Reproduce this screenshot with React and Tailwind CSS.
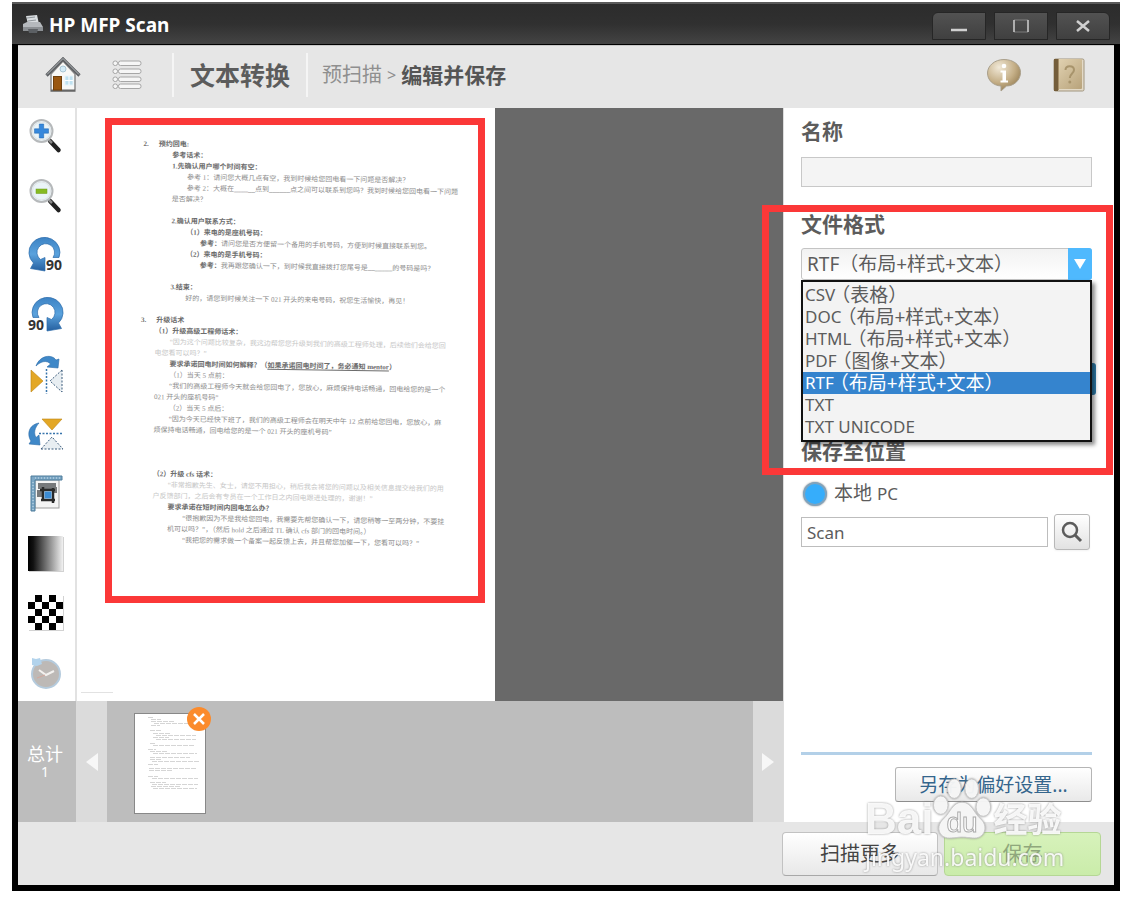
import React, { useState } from "react";

const formats = [
  { name: "CSV", note: "（表格）" },
  { name: "DOC", note: "（布局+样式+文本）" },
  { name: "HTML", note: "（布局+样式+文本）" },
  { name: "PDF", note: "（图像+文本）" },
  { name: "RTF", note: "（布局+样式+文本）" },
  { name: "TXT", note: "" },
  { name: "TXT UNICODE", note: "" },
];

const head = "text-[#6c6c6c] font-bold";
const body = "text-[#8c8c8c]";
const faint = "text-[#c6c6c6]";

const docLines = [
  { cls: `${head}`, text: "2.", rest: "预约回电:" },
  { cls: `${head} pl-[29px]`, text: "参考话术：" },
  { cls: `${head} pl-[29px]`, text: "1.先确认用户哪个时间有空：" },
  { cls: `${body} pl-[44px]`, text: "参考 1：请问您大概几点有空，我到时候给您回电看一下问题是否解决？" },
  { cls: `${body} pl-[44px]`, text: "参考 2：大概在______点到______点之间可以联系到您吗？我到时候给您回电看一下问题" },
  { cls: `${body} pl-[29px]`, text: "是否解决？" },
  { cls: "", text: "" },
  { cls: `${head} pl-[29px]`, text: "2.确认用户联系方式：" },
  { cls: `${head} pl-[44px]`, text: "（1）来电的是座机号码：" },
  { cls: `${body} pl-[58px]`, bold: "参考：", text: "请问您是否方便留一个备用的手机号码，方便到时候直接联系到您。" },
  { cls: `${head} pl-[44px]`, text: "（2）来电的是手机号码：" },
  { cls: `${body} pl-[58px]`, bold: "参考：", text: "我再跟您确认一下，到时候我直接拨打您尾号是_______的号码是吗？" },
  { cls: "", text: "" },
  { cls: `${head} pl-[29px]`, text: "3.结束：" },
  { cls: `${body} pl-[44px]`, text: "好的，请您到时候关注一下 021 开头的来电号码，祝您生活愉快，再见！" },
  { cls: "", text: "" },
  { cls: `${head}`, text: "3.", rest: "升级话术" },
  { cls: `${head} pl-[14px]`, text: "（1）升级高级工程师话术：" },
  { cls: `${faint} pl-[29px]`, text: "“因为这个问题比较复杂，我这边帮您您升级到我们的高级工程师处理，后续他们会给您回" },
  { cls: `${faint} pl-[14px]`, text: "电您看可以吗？”" },
  { cls: `${head} pl-[29px]`, text: "要求承诺回电时间如何解释？（", under: "如果承诺回电时间了，务必通知 mentor", tail: "）" },
  { cls: `${body} pl-[29px]`, text: "（1）当天 5 点前：" },
  { cls: `${body} pl-[29px]`, text: "“我们的高级工程师今天就会给您回电了，您放心，麻烦保持电话畅通，回电给您的是一个" },
  { cls: `${body} pl-[14px]`, text: "021 开头的座机号码”" },
  { cls: `${body} pl-[29px]`, text: "（2）当天 5 点后：" },
  { cls: `${body} pl-[29px]`, text: "“因为今天已经快下班了，我们的高级工程师会在明天中午 12 点前给您回电，您放心，麻" },
  { cls: `${body} pl-[14px]`, text: "烦保持电话畅通，回电给您的是一个 021 开头的座机号码”" },
  { cls: "", text: "" },
  { cls: "", text: "" },
  { cls: "", text: "" },
  { cls: `${head} pl-[14px]`, text: "（2）升级 cfs 话术：" },
  { cls: `${faint} pl-[29px]`, text: "“非常抱歉先生、女士，请您不用担心，稍后我会将您的问题以及相关信息提交给我们的用" },
  { cls: `${faint} pl-[14px]`, text: "户反馈部门，之后会有专员在一个工作日之内回电跟进处理的，谢谢！”" },
  { cls: `${head} pl-[29px]`, text: "要求承诺在短时间内回电怎么办？" },
  { cls: `${body} pl-[44px]`, text: "“很抱歉因为不是我给您回电，我需要先帮您确认一下，请您稍等一至两分钟，不要挂" },
  { cls: `${body} pl-[29px]`, text: "机可以吗？”，（然后 hold 之后通过 TL 确认 cfs 部门的回电时间。）" },
  { cls: `${body} pl-[44px]`, text: "“我把您的需求做一个备案一起反馈上去，并且帮您加催一下，您看可以吗？”" },
];

const PrinterIcon = () => (
  <svg width="22" height="20" viewBox="0 0 22 20" aria-hidden="true">
    <path d="M4 1l11-1 2 9H6z" fill="#d9dde0" />
    <path d="M5 3l8-1M6 6l8-1" stroke="#8f959a" />
    <path d="M1 9l4-2h13l3 5v4H1z" fill="#b5b9bd" />
    <path d="M1 12h20v4H1z" fill="#8b8f93" />
    <path d="M6 14h10l-1 4H7z" fill="#5c6064" />
  </svg>
);

const HomeIcon = () => (
  <svg width="36" height="36" viewBox="0 0 36 36" aria-hidden="true">
    <path d="M6 17L18 4l12 13v17H6z" fill="#f8f8f6" stroke="#8b8b8b" strokeWidth="1.5" />
    <path d="M6 33.500h24" stroke="#666" strokeWidth="2" />
    <path d="M1.500 18.500L18 2l16.500 16.500" fill="none" stroke="#5c5f62" strokeWidth="3.200" />
    <path d="M2 17.500L18 1.500l16 16" fill="none" stroke="#b5b9bc" strokeWidth="1" />
    <circle cx="18" cy="12" r="3" fill="#d5ecf7" stroke="#a9c7d6" />
    <rect x="8.500" y="19.500" width="8" height="13.500" fill="#9a5710" stroke="#70400b" />
    <rect x="20" y="19" width="8" height="9" fill="#bfe1f0" stroke="#e5f3f9" />
    <path d="M24 19v9M20 23.500h8" stroke="#fff" />
  </svg>
);

const MenuIcon = () => (
  <svg width="30" height="30" viewBox="0 0 30 30" fill="#f6f6f6" stroke="#a6a6a6" aria-hidden="true">
    {[1, 9, 17, 24].map((y) => (
      <g key={y}>
        <rect x="1" y={y} width="4.500" height="4.500" rx="2" />
        <rect x="6.500" y={y} width="22.500" height="4.500" rx="2" />
      </g>
    ))}
  </svg>
);

const InfoIcon = () => (
  <svg width="36" height="34" viewBox="0 0 36 34" aria-hidden="true">
    <defs>
      <radialGradient id="bubble" cx="0.35" cy="0.25" r="0.8">
        <stop offset="0" stopColor="#f1e9d8" />
        <stop offset="0.6" stopColor="#c4ae86" />
        <stop offset="1" stopColor="#927a50" />
      </radialGradient>
    </defs>
    <path
      d="M18 1.500c9.500 0 16.500 5.500 16.500 13S28 28 20.500 28L15 33v-5C7 27.500 1.500 22 1.500 15S8.500 1.500 18 1.500z"
      fill="url(#bubble)"
      stroke="#aaa08c"
    />
    <circle cx="18" cy="8" r="2.300" fill="#fff" />
    <path d="M14.500 12.500h5.500v10h2v2h-7.500v-2h2v-8h-2z" fill="#fff" />
  </svg>
);

const BookIcon = () => (
  <svg width="32" height="34" viewBox="0 0 32 34" aria-hidden="true">
    <defs>
      <linearGradient id="cover" x1="0" x2="1" y2="1">
        <stop offset="0" stopColor="#e4d5b5" />
        <stop offset="1" stopColor="#b8a37b" />
      </linearGradient>
    </defs>
    <rect x="1" y="1" width="30" height="32" rx="1.500" fill="#e3dac7" stroke="#a0957e" />
    <rect x="1" y="1" width="28" height="30" rx="1" fill="url(#cover)" />
    <rect x="1" y="1" width="4" height="32" fill="#745d3a" />
    <path d="M5.500 1v31" stroke="#a68f68" />
    <path d="M12.500 12c0-5 8.500-5 8.500 0 0 3.500-4.200 3.500-4.200 8" fill="none" stroke="#a8946c" strokeWidth="2" />
    <circle cx="16.800" cy="24" r="1.500" fill="#a8946c" />
  </svg>
);

const Lens = ({ minus }) => (
  <svg width="36" height="36" viewBox="0 0 36 36" aria-hidden="true">
    <path d="M22 23l8.500 9" stroke="#222" strokeWidth="4.500" strokeLinecap="round" />
    <path d="M21 22l3 3" stroke="#888" strokeWidth="2.500" />
    <circle cx="13.500" cy="13" r="11" fill="#eaf4f8" stroke="#b6b9bb" strokeWidth="2" />
    <circle cx="13.500" cy="13" r="9" fill="none" stroke="#dfe3e5" />
    {minus ? (
      <rect x="8" y="11" width="11" height="4.500" fill="#86bb22" stroke="#6c9a18" strokeWidth="0.500" />
    ) : (
      <path d="M11.300 6h4.400v4.800h4.800v4.400h-4.800V20h-4.400v-4.800H6.500v-4.400h4.800z" fill="#3688dc" stroke="#1d62ad" strokeWidth="0.500" />
    )}
  </svg>
);

const Rotate = ({ right }) => (
  <svg width="36" height="36" viewBox="0 0 36 36" aria-hidden="true">
    <defs>
      <linearGradient id="ring" x2="0" y2="1">
        <stop offset="0" stopColor="#3d83c4" />
        <stop offset="0.5" stopColor="#5aa2dd" />
        <stop offset="1" stopColor="#255f9f" />
      </linearGradient>
    </defs>
    <g transform={right ? "translate(36 0) scale(-1 1)" : undefined}>
      <path
        d="M31 20.500A15.500 15 0 1 0 5.500 26L2.500 31.500 17 34V20.500l-4.500 2A8.800 8.800 0 1 1 25 20.500z"
        fill="url(#ring)"
        stroke="#2d6cab"
        strokeWidth="0.700"
      />
    </g>
    <text
      x={right ? 0 : 18}
      y="33"
      fontSize="14"
      fontWeight="700"
      fontFamily="Noto Sans, sans-serif"
      fill="#333"
      stroke="#fff"
      strokeWidth="2"
      paintOrder="stroke"
    >
      90
    </text>
  </svg>
);

const FlipH = () => (
  <svg width="36" height="40" viewBox="0 0 36 40" aria-hidden="true">
    <path d="M8 11C12 0 24-1 28 5l3-1-1 9-11-1 3.500-3C19 5 13 6 8 11z" fill="#3f88c8" stroke="#2b6ba8" strokeWidth="0.600" />
    <path d="M3 15l12 11L3 37z" fill="#e3a725" stroke="#bd8412" strokeWidth="0.600" />
    <path d="M18.500 14v25" stroke="#3774ac" strokeWidth="1.500" strokeDasharray="2 1.500" />
    <path d="M34 15v22L22 26z" fill="#e8eef2" stroke="#3c5c7c" strokeDasharray="2 1.500" />
  </svg>
);

const FlipV = () => (
  <svg width="38" height="36" viewBox="0 0 38 36" aria-hidden="true">
    <path d="M12 7C1 9 0 19 4 25l-2 3 11 1-1-10-3 2.500C6.500 17 7.500 12 12 7z" fill="#3f88c8" stroke="#2b6ba8" strokeWidth="0.600" />
    <path d="M15 3h20L25 14z" fill="#e3a725" stroke="#bd8412" strokeWidth="0.600" />
    <path d="M12 17.500h24" stroke="#3774ac" strokeWidth="1.500" strokeDasharray="2 1.500" />
    <path d="M14 33h22L25 21z" fill="#e8eef2" stroke="#3c5c7c" strokeDasharray="2 1.500" />
  </svg>
);

const Crop = () => (
  <svg width="34" height="38" viewBox="0 0 34 38" aria-hidden="true">
    <rect x="6" y="5" width="24" height="28" fill="#f4f4f4" stroke="#9c9c9c" />
    <path d="M9 8h18v6H9zM8 15h6v7H8zM25 12h3v6h-3z" fill="#77797b" />
    <path d="M11 15h15M14 12v14M12 25h14M24 13v15" stroke="#2a2a2a" strokeWidth="2.500" />
    <rect x="15.500" y="16.500" width="7" height="7" fill="#3b8bd3" />
    <path d="M2 1h31v4H6v31H2z" fill="#7ba6c4" stroke="#4f7c9b" />
    <path d="M6 3h26M4 7v28" stroke="#cfe3f0" strokeDasharray="1 2" />
  </svg>
);

const Gradient = () => (
  <svg width="38" height="38" viewBox="0 0 38 38" aria-hidden="true">
    <defs>
      <linearGradient id="tone">
        <stop offset="0" stopColor="#000" />
        <stop offset="0.150" stopColor="#111" />
        <stop offset="1" stopColor="#f2f2f2" />
      </linearGradient>
    </defs>
    <rect x="2" y="2" width="35" height="35" fill="#d2d2d2" />
    <rect x="1" y="1" width="35" height="35" fill="url(#tone)" />
  </svg>
);

const Checker = () => (
  <svg width="38" height="38" viewBox="0 0 38 38" aria-hidden="true">
    <rect x="2" y="2" width="35" height="35" fill="#d2d2d2" />
    <rect x="1" y="1" width="35" height="35" fill="#fff" />
    {[0, 1, 2, 3, 4].map((r) =>
      [0, 1, 2, 3, 4]
        .filter((c) => (r + c) % 2 === 1)
        .map((c) => <rect key={`${r}${c}`} x={1 + c * 7} y={1 + r * 7} width="7" height="7" fill="#000" />)
    )}
  </svg>
);

const Clock = () => (
  <svg width="34" height="34" viewBox="0 0 34 34" aria-hidden="true">
    <circle cx="17" cy="18" r="14" fill="#bdb9b6" stroke="#b5cbdd" strokeWidth="2" />
    <path d="M3 9V2l4 1 4-1 2 6-5 2z" fill="#b2d3ec" />
    <path d="M10 14l7 5 8-4" fill="none" stroke="#f3f1ef" strokeWidth="2" />
    <path d="M8 22l8-3" stroke="#d3a79c" />
  </svg>
);

const tools = [
  { label: "放大", icon: <Lens /> },
  { label: "缩小", icon: <Lens minus /> },
  { label: "向左旋转", icon: <Rotate /> },
  { label: "向右旋转", icon: <Rotate right /> },
  { label: "水平翻转", icon: <FlipH /> },
  { label: "垂直翻转", icon: <FlipV /> },
  { label: "裁剪", icon: <Crop /> },
  { label: "亮度", icon: <Gradient /> },
  { label: "对比度", icon: <Checker /> },
  { label: "还原", icon: <Clock /> },
];

const TitleBar = () => (
  <header className="h-[43px] flex items-center justify-between pl-2.5 pr-2.5 border-t-2 border-t-[#5a5a5a] border-b border-b-black bg-linear-to-b from-[#2c2c2c] via-[#303030] to-[#444]">
    <div className="flex items-center gap-[5px] pt-0.5">
      <PrinterIcon />
      <h1 className="text-white text-[19px] leading-6 font-bold">HP MFP Scan</h1>
    </div>
    <div className="flex gap-2 pt-1 text-[#d0d0d0]">
      <button aria-label="最小化" className="w-[54px] h-7 flex items-center justify-center rounded-tl-md border border-[#262626] bg-linear-to-b from-[#525252] to-[#404040]">
        <svg width="18" height="16"><path d="M1 12h16" stroke="currentColor" strokeWidth="2.500" /></svg>
      </button>
      <button aria-label="最大化" className="w-[54px] h-7 flex items-center justify-center border border-[#262626] bg-linear-to-b from-[#525252] to-[#404040]">
        <svg width="18" height="16" fill="none" stroke="currentColor"><path d="M2 2v12M16 2v12" strokeWidth="1.500" /><path d="M2 2h14M2 14h14" opacity="0.400" /></svg>
      </button>
      <button aria-label="关闭" className="w-[54px] h-7 flex items-center justify-center rounded-tr-md border border-[#262626] bg-linear-to-b from-[#525252] to-[#404040]">
        <svg width="16" height="14"><path d="M2 2l12 10M14 2L2 12" stroke="currentColor" strokeWidth="2.500" /></svg>
      </button>
    </div>
  </header>
);

const Toolbar = () => (
  <nav className="h-[63px] shrink-0 flex items-center justify-between pl-[27px] pr-[29px] pb-1 bg-[#e6e6e6] border-t border-[#c8c8c8]">
    <div className="flex items-center">
      <button aria-label="主页"><HomeIcon /></button>
      <button aria-label="菜单" className="ml-[31px]"><MenuIcon /></button>
      <span className="ml-[30px] h-11 border-l-2 border-[#f5f5f5]" />
      <h2 className="ml-4 text-[25px] leading-8 font-bold text-[#5c5c5c]">文本转换</h2>
      <span className="ml-4 h-11 border-l-2 border-[#f5f5f5]" />
      <p className="ml-3.5 flex items-center text-[20px] leading-7 text-[#8f8f8f]">
        预扫描 <span className="mx-[5px] text-base">&gt;</span>
        <strong className="text-[21px] text-[#555]">编辑并保存</strong>
      </p>
    </div>
    <div className="flex items-center gap-[31px]">
      <button aria-label="信息"><InfoIcon /></button>
      <button aria-label="帮助"><BookIcon /></button>
    </div>
  </nav>
);

const ScannedPage = () => (
  <article className="relative w-[418px] shrink-0 bg-white overflow-hidden">
    <div className="origin-top-left rotate-[0.8deg] pt-[30px] pl-[67px] font-['Liberation_Serif','Noto_Sans_CJK_SC',serif] text-[7px] leading-[11px] whitespace-nowrap">
      {docLines.map((line, i) => (
        <p key={i} className={`h-[11px] ${line.cls}`}>
          {line.bold && <b className="text-[#6c6c6c]">{line.bold}</b>}
          {line.text}
          {line.rest && <span className="ml-2.5">{line.rest}</span>}
          {line.under && <u>{line.under}</u>}
          {line.tail}
        </p>
      ))}
    </div>
    <div className="absolute left-[28px] top-[10px] w-[380px] h-[485px] border-7 border-[#fb3838]" />
    <div className="absolute left-1 bottom-2 w-8 border-t border-[#e2e2e2]" />
  </article>
);

const thumbRows = [
  [13, 10, 5], [16, 12, 10], [16, 14, 24], [19, 16, 42], [16, 18, 9],
  [15, 23, 12], [18, 26, 18], [21, 28, 40], [18, 30, 16], [21, 32, 40],
  [15, 36, 6], [18, 38, 42], [13, 42, 8], [15, 44, 18], [18, 46, 44],
  [15, 50, 40], [15, 52, 12], [17, 54, 48], [13, 57, 10], [14, 61, 48], [14, 63, 24],
  [13, 69, 10], [17, 71, 46], [15, 75, 16], [17, 77, 46], [16, 79, 30], [18, 81, 44],
];

const Filmstrip = () => (
  <div className="h-[121px] shrink-0 flex bg-[#bdbdbd]">
    <div className="w-[58px] shrink-0 flex flex-col items-center justify-center pr-1 text-white">
      <span className="text-[18px] leading-5">总计</span>
      <span className="text-sm leading-4">1</span>
    </div>
    <button aria-label="上一页" className="w-[31px] shrink-0 flex items-center justify-center bg-[#dbdbdb]">
      <svg width="12" height="18"><path d="M12 0v18L0 9z" fill="#f7f7f7" /></svg>
    </button>
    <div className="flex-1 pl-[27px] pt-3">
      <div className="relative w-[72px] h-[101px] border border-[#888] bg-white">
        <svg width="70" height="99" stroke="#c4c4c4" aria-hidden="true">
          {thumbRows.map(([x, y, w]) => (
            <path key={y} d={`M${x} ${y - 6.500}h${w}`} strokeDasharray="5 1" opacity="0.700" />
          ))}
        </svg>
        <button aria-label="删除" className="absolute -top-[7px] -right-[6px] size-6 flex items-center justify-center rounded-full bg-[#fb8b2c]">
          <svg width="12" height="12"><path d="M1 1l10 10M11 1L1 11" stroke="#fff" strokeWidth="2.500" /></svg>
        </button>
      </div>
    </div>
    <button aria-label="下一页" className="w-[30px] shrink-0 flex items-center justify-center bg-[#dbdbdb]">
      <svg width="12" height="18"><path d="M0 0v18l12-9z" fill="#f7f7f7" /></svg>
    </button>
  </div>
);

const FormatPicker = ({ value, onChange }) => (
  <div className="relative h-[32px]">
    <select
      id="format"
      value={value}
      onChange={(e) => onChange(e.target.value)}
      className="appearance-none w-full h-8 pl-[5px] rounded-[3px] border border-[#c4c4c4] bg-linear-to-b from-[#f2f2f2] to-white text-[19px] leading-7 text-[#5c5c5c]"
    >
      {formats.map((f) => (
        <option key={f.name} value={f.name}>{f.name}{f.note}</option>
      ))}
    </select>
    <span className="pointer-events-none absolute right-0 top-0 w-6 h-8 flex items-center justify-center rounded-r-[3px] bg-[#4fb9fe]">
      <svg width="12" height="10"><path d="M0 0h12L6 10z" fill="#fff" /></svg>
    </span>
    <ul
      role="listbox"
      aria-label="文件格式"
      className="absolute z-10 left-0 right-0 top-8 py-0.5 border-2 border-[#111] bg-[#f3f3f3] shadow-[3px_3px_4px_rgba(0,0,0,0.45)]"
    >
      {formats.map((f) => (
        <li
          key={f.name}
          role="option"
          aria-selected={f.name === value}
          onClick={() => onChange(f.name)}
          className={`h-[22px] flex items-center pl-0.5 text-[17px] leading-[22px] whitespace-nowrap ${
            f.name === value ? "bg-[#3584ce] text-white" : "text-[#5c5c5c]"
          }`}
        >
          {f.name}
          <span className="-ml-1 text-[19px]">{f.note}</span>
        </li>
      ))}
    </ul>
  </div>
);

const SettingsPanel = () => {
  const [format, setFormat] = useState("RTF");
  return (
    <aside className="relative w-[331px] shrink-0 flex flex-col pl-[17px] pr-[22px] pt-[9px] pb-5 border-l border-[#ddd] bg-white">
      <label htmlFor="name" className="text-[21px] leading-7 font-bold text-[#5c5c5c]">名称</label>
      <input id="name" type="text" className="mt-3 w-full h-[30px] border border-[#c8c8c8] bg-[#f4f4f4]" />

      <label htmlFor="format" className="mt-[23px] mb-[10px] text-[21px] leading-7 font-bold text-[#5c5c5c]">文件格式</label>
      <FormatPicker value={format} onChange={setFormat} />

      <div className="mt-[83px] -mr-1 h-8 self-end w-6 rounded-[3px] bg-[#2f7fae]" />

      <h3 className="mt-[42px] text-[21px] leading-7 font-bold text-[#5c5c5c]">保存至位置</h3>
      <label className="mt-3.5 flex items-center gap-[7px] text-[19px] leading-7 text-[#5c5c5c]">
        <input
          type="radio"
          name="location"
          defaultChecked
          className="appearance-none ml-0.5 size-6 rounded-full border-2 border-[#7fa3bd] bg-[#36adfb] shadow-[0_0_2px_#888]"
        />
        <span>本地 <span className="text-[17px]">PC</span></span>
      </label>
      <div className="mt-1.5 flex items-center gap-1.5">
        <input
          type="text"
          aria-label="文件夹"
          defaultValue="Scan"
          className="min-w-0 flex-1 h-[30px] px-[5px] border border-[#bdbdbd] bg-white text-[17px] text-[#5c5c5c]"
        />
        <button aria-label="浏览" className="mr-0.5 size-9 flex items-center justify-center rounded-[3px] border border-[#b8b8b8] bg-linear-to-b from-white to-[#e2e2e2] shadow-xs">
          <svg width="22" height="22" fill="none" stroke="#5c5c5c"><circle cx="9" cy="9" r="7" strokeWidth="2.500" /><path d="M14 14l6 6" strokeWidth="3" /></svg>
        </button>
      </div>

      <hr className="mt-auto border-t-3 border-[#b3d0e8]" />
      <button className="mt-3 self-end w-[197px] h-[35px] rounded-[3px] border border-[#b5b5b5] border-b-[#8e8e8e] bg-linear-to-b from-white to-[#e9e9e9] text-[19px] leading-7 text-[#34658c]">
        另存为偏好设置...
      </button>
      <div className="pointer-events-none absolute z-20 -left-[22px] right-px top-[97px] h-[270px] border-7 border-[#fb3838]" />
    </aside>
  );
};

const Watermark = () => (
  <div className="pointer-events-none absolute z-30 right-[51px] bottom-[18px] w-[204px] text-white/90 drop-shadow-[0_0_1px_rgba(120,120,120,0.8)]">
    <div className="flex items-end">
      <span className="font-['Liberation_Sans',sans-serif] text-[44px] leading-[44px] font-bold">Bai</span>
      <svg width="60" height="64" viewBox="0 0 62 64" className="shrink-0">
        <g fill="#fff" fillOpacity="0.9" stroke="#c9c9c9">
          <ellipse cx="8" cy="28" rx="7.500" ry="9.500" />
          <ellipse cx="22" cy="11" rx="7" ry="10" />
          <ellipse cx="40" cy="11" rx="7" ry="10" />
          <ellipse cx="52" cy="30" rx="7.500" ry="9.500" />
          <path d="M30 25c10 0 12 11 19 17 9 8 4 20-6 20-6 0-8-1-13-1s-7 1-13 1c-11 0-15-12-6-20 7-6 9-17 19-17z" />
        </g>
        <text x="30" y="56" textAnchor="middle" fontSize="29" fontFamily="Liberation Sans, sans-serif" fill="#fff" stroke="#aaa" strokeWidth="1">du</text>
      </svg>
      <span className="text-[34px] leading-[44px] font-bold whitespace-nowrap">经验</span>
    </div>
    <p className="text-[23px] leading-8 whitespace-nowrap">jingyan.baidu.com</p>
  </div>
);

const App = () => {
  return (
    <div className="min-h-screen flex flex-col pt-0.5 pb-1.5 pl-3 pr-2 bg-white font-['Noto_Sans','Noto_Sans_CJK_SC',sans-serif]">
      <div className="relative flex-1 flex flex-col bg-black">
        <TitleBar />
        <div className="flex-1 flex flex-col mx-1.5 mb-1.5">
          <Toolbar />
          <main className="flex-1 flex">
            <div className="flex-1 min-w-0 flex flex-col">
              <div className="flex-1 flex bg-[#696969]">
                <div className="w-[59px] shrink-0 flex flex-col justify-between pr-px bg-white border-r-2 border-[#e2e2e2]">
                  {tools.map((t) => (
                    <button key={t.label} aria-label={t.label} className="h-14 flex items-center justify-center">
                      {t.icon}
                    </button>
                  ))}
                </div>
                <ScannedPage />
              </div>
              <Filmstrip />
            </div>
            <SettingsPanel />
          </main>
          <footer className="h-[63px] shrink-0 flex items-center justify-end gap-1.5 pr-[13px] bg-[#e6e6e6]">
            <button className="w-[156px] h-11 rounded border border-[#c2c2c2] border-b-[#a8a8a8] bg-linear-to-b from-white to-[#e8e8e8] text-xl text-[#444]">
              扫描更多
            </button>
            <button className="w-[157px] h-11 rounded border border-[#b5d795] bg-linear-to-b from-[#d7f2bb] to-[#caecaa] text-xl text-[#8fa77c]">
              保存
            </button>
          </footer>
        </div>
        <Watermark />
      </div>
    </div>
  );
};

export default App;
